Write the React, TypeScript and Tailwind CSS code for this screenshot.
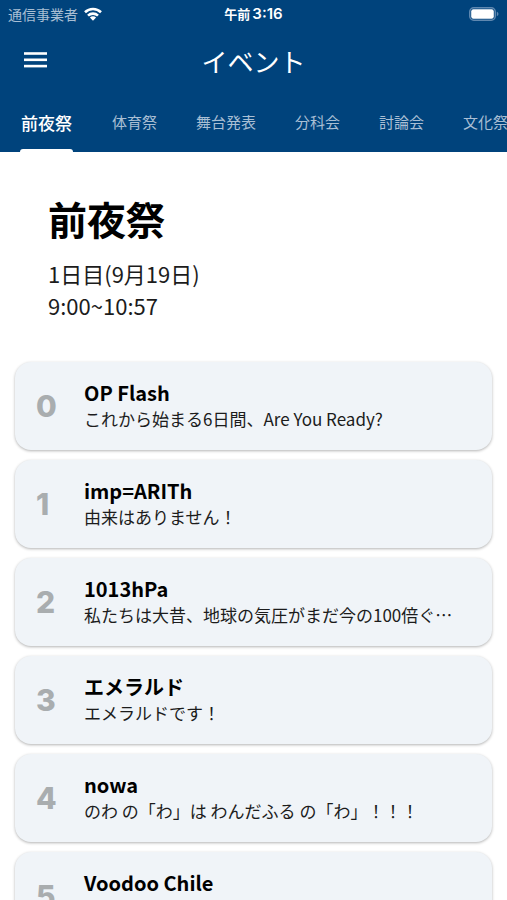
import React from "react";

const tabs = ["前夜祭", "体育祭", "舞台発表", "分科会", "討論会", "文化祭"];

const events = [
  { title: "OP Flash", text: "これから始まる6日間、Are You Ready?" },
  { title: "imp=ARITh", text: "由来はありません！" },
  { title: "1013hPa", text: "私たちは大昔、地球の気圧がまだ今の100倍ぐ…" },
  { title: "エメラルド", text: "エメラルドです！" },
  { title: "nowa", text: "のわ の「わ」は わんだふる の「わ」！！！" },
  { title: "Voodoo Chile", text: "" },
];

function StatusBar() {
  return (
    <div className="grid grid-cols-3 items-center h-7 px-2">
      <div className="flex items-center gap-1.5 text-sm text-[#a9bfd4]">
        <span>通信事業者</span>
        <svg width="18" height="14" viewBox="0 0 18 14" fill="none" stroke="white" strokeWidth="2.6">
          <path d="M1 5.2a11.5 11.5 0 0 1 16 0" />
          <path d="M4 8.6a7.2 7.2 0 0 1 10 0" />
          <path d="M9 13.8 5.9 10.6a4.4 4.4 0 0 1 6.2 0z" fill="white" stroke="none" />
        </svg>
      </div>
      <div className="flex justify-center items-baseline gap-0.5 text-[13px] font-bold text-white">
        <span>午前</span>
        <span className="font-['Inter',sans-serif] text-[15px] font-semibold">3:16</span>
      </div>
      <svg className="justify-self-end" width="30" height="14" viewBox="0 0 30 14" fill="none">
        <rect x="0.75" y="0.75" width="25.5" height="12.5" rx="4" stroke="#5f88b0" strokeWidth="1.5" />
        <rect x="2.2" y="2.2" width="22.6" height="9.6" rx="2.2" fill="white" />
        <path d="M27.8 4.8c2.2.7 2.2 3.7 0 4.4z" fill="#5f88b0" />
      </svg>
    </div>
  );
}

function Header() {
  return (
    <header className="bg-[#00437c] text-white overflow-hidden">
      <StatusBar />
      <div className="grid grid-cols-[46px_1fr_46px] items-center h-16 px-3">
        <button aria-label="menu" className="flex justify-center">
          <svg width="23" height="16" viewBox="0 0 23 16" fill="white">
            <rect y="0.2" width="23" height="2.6" />
            <rect y="6.5" width="23" height="2.6" />
            <rect y="12.8" width="23" height="2.6" />
          </svg>
        </button>
        <h1 className="text-center text-[26px]">イベント</h1>
      </div>
      <nav className="flex gap-[39px] h-15 px-5 whitespace-nowrap">
        {tabs.map((tab, i) => (
          <button
            key={tab}
            className={
              i === 0
                ? "shrink-0 flex flex-col text-[17px] font-medium"
                : "shrink-0 flex flex-col text-[15px] text-[#a9bfd4]"
            }
          >
            <span className={i === 0 ? "flex flex-1 items-center px-px pt-1" : "flex flex-1 items-center pt-1"}>
              {tab}
            </span>
            <span className={i === 0 ? "h-[3px] w-full rounded-t-sm bg-white" : "h-[3px] w-full"} />
          </button>
        ))}
      </nav>
    </header>
  );
}

function EventCard({ index, title, text }: { index: number; title: string; text: string }) {
  return (
    <li className="flex items-center h-22 px-[21px] rounded-2xl bg-[#f0f4f8] shadow-[0_1px_3px_rgba(0,0,0,0.3)]">
      <span className="w-12 shrink-0 font-['Inter',sans-serif] text-[30px] font-extrabold text-[#a9adaf]">
        {index}
      </span>
      <div className="min-w-0 flex-1 pb-0.5">
        <h3 className="text-xl leading-7 font-bold text-black">{title}</h3>
        <p className="truncate min-h-6 text-[17px] leading-6">{text}</p>
      </div>
    </li>
  );
}

export default function App() {
  return (
    <div className="h-screen overflow-hidden bg-white text-[#1c1c1c] font-['Noto_Sans_CJK_JP',sans-serif]">
      <Header />
      <main>
        <section className="px-12 pt-10 pb-[41px]">
          <h2 className="text-[39px] leading-13 font-bold text-black">前夜祭</h2>
          <p className="mt-[13px] text-[22px] leading-8">
            1日目(9月19日)
            <br />
            9:00~10:57
          </p>
        </section>
        <ul className="flex flex-col gap-2.5 px-[15px]">
          {events.map((event, i) => (
            <EventCard key={event.title} index={i} title={event.title} text={event.text} />
          ))}
        </ul>
      </main>
    </div>
  );
}
